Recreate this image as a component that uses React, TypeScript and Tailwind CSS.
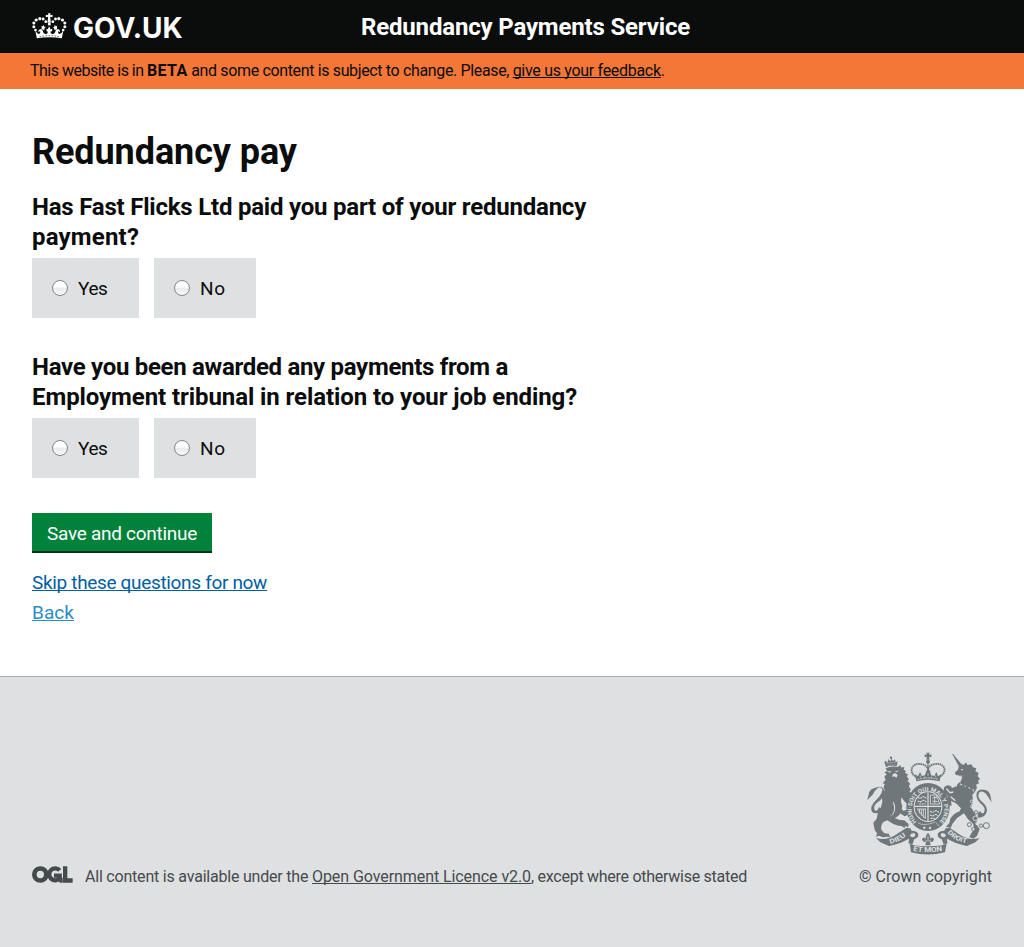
import React from "react";

function CrownIcon() {
  return (
    <svg viewBox="37 38 104 78" className="mt-px h-[26px] w-[35px] shrink-0" fill="#fff" aria-hidden="true">
      <path d="M51 114 L46 89 Q51 100 57 101 Q63 100 61 93 Q58 93 57 96 Q53 91 60 87 Q65 85 68 90 Q70 100 76 101 Q84 101 84 94 L80 92 V85 L84 87 L88 78 L92 87 L97 85 V92 L92 94 Q92 101 100 101 Q106 100 108 90 Q111 85 116 87 Q123 91 119 96 Q118 93 115 93 Q113 100 119 101 Q126 100 131 89 L126 114 Q88 107 51 114Z" />
      <path d="M85 39h7l-1 6 7-2v8l-7-2 2 18h-10l2-18-7 2v-8l7 2z" />
      <circle cx="88.500" cy="71" r="4.500" />
      <circle cx="78" cy="64" r="4.200" />
      <circle cx="70" cy="56" r="4.200" />
      <circle cx="60" cy="55" r="4.800" />
      <circle cx="49" cy="59" r="4.800" />
      <circle cx="42" cy="68" r="4.500" />
      <circle cx="42" cy="79" r="4.500" />
      <circle cx="47" cy="89" r="4" />
      <circle cx="99" cy="64" r="4.200" />
      <circle cx="107" cy="56" r="4.200" />
      <circle cx="117" cy="55" r="4.800" />
      <circle cx="128" cy="59" r="4.800" />
      <circle cx="135" cy="68" r="4.500" />
      <circle cx="135" cy="79" r="4.500" />
      <circle cx="130" cy="89" r="4" />
      <path d="M65 76l4 2 3-4 2 6 4 1-4 3-1 6-6-3-4 1 3-5zM112 76l-4 2-3-4-2 6-4 1 4 3 1 6 6-3 4 1-3-5z" />
      <path d="M59 109Q88 103 118 109" fill="none" stroke="#0b0c0c" strokeWidth="1.800" strokeDasharray="5 4" />
    </svg>
  );
}

function OglLogo() {
  return (
    <svg viewBox="0 0 123 51" className="h-[17px] w-[41px] shrink-0" aria-label="OGL">
      <circle cx="25" cy="25.500" r="18" fill="none" stroke="#454a4c" strokeWidth="14" />
      <path d="M83 13A18 18 0 1 0 83 37V29H66" fill="none" stroke="#454a4c" strokeWidth="13" />
      <path d="M93 1H106V37H122V50H93Z" fill="#454a4c" />
      <path d="M78 35H92V50H83Z" fill="#454a4c" />
    </svg>
  );
}

function Crest() {
  const ink = "#6f777b";
  const paper = "#dee0e2";
  return (
    <svg viewBox="51 36 375 309" className="h-[103px] w-[125px]" fill={ink} aria-hidden="true">
      <defs>
        <path id="garter" d="M200 246A49 54 0 1 1 268 246" />
        <path id="dieu" d="M121 312Q150 305 172 284" />
        <path id="motto" d="M189 332Q233 341 279 332" />
        <path id="droit" d="M292 279Q314 303 352 310" />
      </defs>

      {/* lion */}
      <path d="M108 81L103 66L108 62L112 69L116 57L121 65L125 55L129 64L135 58L137 67L143 64L140 79Q124 74 108 81Z" />
      <path d="M109 69L139 67M113 76L138 74" stroke={paper} strokeWidth="2" strokeDasharray="3 3" />
      <circle cx="123" cy="53" r="3.500" />
      <path d="M107 85Q124 76 143 81L151 75L153 82L163 82L161 89L168 93L165 98L175 104L170 108L177 119L172 122L181 132L176 137L183 150L178 153L184 161L181 169L190 178L184 184L190 192L183 196Q176 190 171 192L163 184L154 172Q151 187 157 199L153 216Q148 228 134 234Q148 242 163 241L176 252L174 263L168 257L163 264L155 258L145 257Q127 253 112 241L100 246Q91 258 94 269L103 280L116 281L121 291L111 290L99 292L86 287L78 291L81 280L74 270L70 248L80 236L84 217Q95 203 97 185Q92 165 104 151Q98 140 105 132L98 130L107 119L103 110L110 103L103 97L111 93Z" />
      <path d="M150 203L160 212L173 209L181 218L176 220L182 228L173 225L164 229L150 220Z" />
      <path d="M79 220Q61 220 64 201Q69 188 84 174Q98 159 97 147Q92 139 84 144Q74 151 68 164L52 180L56 163Q59 145 77 143Q99 135 102 151Q105 171 83 187Q66 199 75 212Q84 213 87 201L93 207Q90 219 79 220Z" />
      <path d="M109 92l16 3-5 3zM134 95l14-4-8 6zM128 102l9-2 6 6-4 7-6-4-6 2z" fill={paper} />
      <path d="M128 185Q136 205 129 220L119 231L131 221Q140 203 131 186Z" fill={paper} />

      {/* unicorn */}
      <path d="M308 42L333 72L329 82Z" stroke={ink} strokeWidth="2" />
      <path d="M327 77L332 71L342 74L348 67L352 75L364 73L369 82L379 85L376 94L386 99L383 108L390 117L384 122L387 130L378 134L381 143L374 157L367 164Q371 184 364 202L373 219L384 235L378 252L389 267L381 288L370 296L358 291L364 280L374 268L369 251L354 238L342 220L321 234L307 252L302 264L288 260L298 249L301 236Q310 221 329 214L333 205L318 190L303 183L305 197L297 197L290 180L295 171L281 154L282 142L291 136L301 137L307 144L321 137L331 127L337 111L327 108L317 105L315 97L324 89Z" />
      <path d="M332 87l8 1-4 4zM317 104l11 3 10 0-3 3-18-2z" fill={paper} />
      <path d="M324 132L371 153" stroke={paper} strokeWidth="9" />
      <path d="M321 135L328 126L333 137L341 130L345 141L353 136L357 147L365 143L370 153L365 158L321 139Z" />
      <path d="M382 234Q411 231 411 209Q409 195 394 184Q381 171 387 158Q395 149 408 161L425 187L421 166Q418 151 402 149Q385 146 380 159Q376 173 390 189Q409 202 402 218Q394 224 391 213L384 219Z" />
      <path d="M289 146l11 12 10-2M302 170l14 12" stroke={paper} strokeWidth="4" fill="none" />
      <path d="M311 131l9 8" stroke={paper} strokeWidth="3" />
      <g fill="none" stroke={ink} strokeWidth="3">
        <circle cx="409" cy="257" r="9" />
        <circle cx="393" cy="257" r="5" />
        <circle cx="358" cy="254" r="6" />
        <circle cx="371" cy="268" r="6" />
        <circle cx="378" cy="217" r="5" />
      </g>
      <g fill="none" stroke={paper} strokeWidth="2.500">
        <circle cx="368" cy="199" r="6" />
        <circle cx="376" cy="235" r="7" />
        <circle cx="381" cy="250" r="4" />
        <circle cx="365" cy="184" r="4" />
      </g>

      {/* royal crown */}
      <path d="M229 38h10l-2 7 7-2v9l-7-2 2 9h-10l2-9-7 2v-9l7 2z" />
      <circle cx="234" cy="65" r="6" />
      <path d="M201 112Q180 101 186 84Q194 68 217 73Q231 76 234 89Q237 76 251 73Q275 68 283 84Q287 101 266 112" fill="none" stroke={ink} strokeWidth="5.500" strokeDasharray="5 1.500" />
      <path d="M234 69V94" stroke={ink} strokeWidth="5" strokeDasharray="4 1.500" />
      <path d="M199 124L195 103L204 109L210 96L216 108L225 106L230 91L235 87L240 92L243 106L253 108L259 96L264 109L273 103L269 124Q234 115 199 124Z" />
      <path d="M203 118Q234 110 265 118" stroke={paper} strokeWidth="2.500" strokeDasharray="5 3" fill="none" />
      <path d="M211 106v6M257 106v6M234 100v7M222 112h5M241 112h5" stroke={paper} strokeWidth="2" />

      {/* garter and shield */}
      <ellipse cx="234" cy="201" rx="65" ry="72" />
      <ellipse cx="234" cy="200" rx="43" ry="46" fill={paper} />
      <ellipse cx="234" cy="200" rx="40" ry="43" />
      <text fontFamily="Roboto, sans-serif" fontWeight="700" fill={paper} fontSize="17">
        <textPath href="#garter" textLength="247" lengthAdjust="spacingAndGlyphs">HONI·SOIT QUI MAL Y PENSE</textPath>
      </text>
      <path d="M234 158V243M193 199H275" stroke={paper} strokeWidth="3.500" />
      <path d="M203 172q8 5 13 0t13 3M203 183q8 5 13 0t13 3M207 192h20M240 214q8 5 13 0t13 3M240 225q8 5 13 0t10 3M242 235h12" fill="none" stroke={paper} strokeWidth="3.500" strokeDasharray="6 2" />
      <path d="M241 165H259L269 192H241ZM247 174l14-2M247 183l16 2M254 168v22" fill="none" stroke={paper} strokeWidth="2.500" />
      <path d="M202 207L226 236V206M208 207v14M214 207v20M220 207v26M202 207H227" fill="none" stroke={paper} strokeWidth="2.500" />
      <circle cx="223" cy="263" r="3.500" fill={paper} />
      <circle cx="240" cy="264" r="3.500" fill={paper} />
      <path d="M204 249Q222 259 254 247M257 247L268 259" fill="none" stroke={paper} strokeWidth="2" />

      {/* motto ribbon */}
      <path d="M78 294Q110 305 144 280L169 264L181 265L190 281Q174 306 117 318L91 307Z" />
      <path d="M172 289Q172 275 188 272Q204 273 205 285Q204 294 193 297L187 314L175 309Q180 298 172 289Z" />
      <path d="M180 287Q183 278 193 280Q199 284 193 290Q185 294 180 287Z" fill={paper} />
      <path d="M389 294Q357 305 323 280L300 264L287 265L278 281Q294 306 351 318L376 307Z" />
      <path d="M296 289Q296 275 280 272Q264 273 263 285Q264 294 275 297L281 314L293 309Q288 298 296 289Z" />
      <path d="M288 287Q285 278 275 280Q269 284 275 290Q283 294 288 287Z" fill={paper} />
      <path d="M179 310Q185 319 234 319Q283 319 290 310L285 337Q234 350 183 337Z" />
      <g fontFamily="Roboto, sans-serif" fontWeight="700" fill={paper}>
        <text fontSize="20"><textPath href="#dieu" textLength="54" lengthAdjust="spacingAndGlyphs">DIEU</textPath></text>
        <text fontSize="21"><textPath href="#motto" textLength="89" lengthAdjust="spacingAndGlyphs">ET MON</textPath></text>
        <text fontSize="20"><textPath href="#droit" textLength="66" lengthAdjust="spacingAndGlyphs">DROIT</textPath></text>
      </g>

      {/* fleur-de-lis */}
      <path d="M234 278Q245 290 238 299Q246 287 252 297Q250 308 240 306L242 316H226L228 306Q218 308 216 297Q222 287 230 299Q223 290 234 278Z" />
      <path d="M224 303h20M234 287v13" stroke={paper} strokeWidth="2" />
    </svg>
  );
}

function Radio({ name, label, labelClass, boxClass }: { name: string; label: string; labelClass: string; boxClass: string }) {
  return (
    <label className={`flex h-[60px] items-center bg-[#dee0e2] pl-5 ${boxClass}`}>
      <input
        type="radio"
        name={name}
        className="mr-[10px] size-4 appearance-none rounded-full border border-[#858687] bg-linear-to-b from-white from-40% via-[#ebebeb] via-55% to-[#fafafa]"
      />
      <span className={`pt-0.5 text-[19px] leading-[30px] ${labelClass}`}>{label}</span>
    </label>
  );
}

function YesNo({ name }: { name: string }) {
  return (
    <div className="mt-1.5 flex gap-[15px]">
      <Radio name={name} label="Yes" boxClass="w-[107px]" labelClass="tracking-[-0.4px]" />
      <Radio name={name} label="No" boxClass="w-[102px]" labelClass="tracking-[0.7px]" />
    </div>
  );
}

export default function App() {
  return (
    <div className="flex min-h-[947px] flex-col bg-white font-['Roboto','Liberation_Sans',sans-serif] text-[#0b0c0c]">
      <header className="flex h-[53px] items-start border-b border-black bg-[#0b0c0c] px-8 text-white">
        <a href="#" className="flex w-[329px] gap-1.5 pt-3">
          <CrownIcon />
          <span className="pt-px font-['Inter','Liberation_Sans',sans-serif] text-[28px] leading-[30px] font-bold">GOV.UK</span>
        </a>
        <span className="pt-3 text-2xl leading-[30px] font-bold tracking-[-0.167px] whitespace-nowrap">Redundancy Payments Service</span>
      </header>

      <div className="h-9 bg-[#f47738] px-[30px] pt-2 text-base leading-5 whitespace-pre">
        <span className="tracking-[-0.505px]">This website is in </span>
        <strong className="tracking-[0.35px]">BETA</strong>
        <span className="tracking-[-0.356px]"> and some content is subject to change. Please, </span>
        <a href="#" className="tracking-[-0.3px] underline decoration-1 underline-offset-1 [text-decoration-skip-ink:none]">give us your feedback</a>.
      </div>

      <main className="h-[587px] px-8 pt-[43px]">
        <h1 className="text-4xl leading-10 font-bold tracking-[-0.08px]">Redundancy pay</h1>
        <form>
          <fieldset className="mt-5">
            <legend className="text-2xl leading-[30px] font-bold whitespace-nowrap">
              <span className="block tracking-[-0.213px]">Has Fast Flicks Ltd paid you part of your redundancy</span>
              <span className="block tracking-[0.19px]">payment?</span>
            </legend>
            <YesNo name="paid" />
          </fieldset>
          <fieldset className="mt-[34px]">
            <legend className="text-2xl leading-[30px] font-bold whitespace-nowrap">
              <span className="block tracking-[-0.302px]">Have you been awarded any payments from a</span>
              <span className="block tracking-[-0.082px]">Employment tribunal in relation to your job ending?</span>
            </legend>
            <YesNo name="tribunal" />
          </fieldset>
          <button
            type="button"
            className="mt-[35px] block h-10 w-[180px] border-b-2 border-[#003618] bg-[#00823b] pt-[3px] text-center text-[19px] leading-[35px] tracking-[-0.28px] whitespace-nowrap text-white"
          >
            Save and continue
          </button>
        </form>
        <div className="mt-[15px] flex flex-col items-start text-[19px] leading-[30px]">
          <a href="#" className="tracking-[-0.332px] text-[#005ea5] underline decoration-1 underline-offset-1 [text-decoration-skip-ink:none]">Skip these questions for now</a>
          <a href="#" className="tracking-[0.07px] text-[#2b8cc4] underline decoration-1 underline-offset-1 [text-decoration-skip-ink:none]">Back</a>
        </div>
      </main>

      <footer className="flex h-[271px] items-start justify-between border-t border-[#a1acb2] bg-[#dee0e2] px-8 pt-[75px] text-base leading-5 text-[#454a4c]">
        <div className="flex pt-[114px]">
          <OglLogo />
          <p className="ml-3 pt-px whitespace-pre">
            <span className="tracking-[-0.205px]">All content is available under the </span>
            <a href="#" className="tracking-[-0.075px] underline decoration-1 underline-offset-1 [text-decoration-skip-ink:none]">Open Government Licence v2.0</a>
            <span className="tracking-[-0.27px]">, except where otherwise stated</span>
          </p>
        </div>
        <div className="flex flex-col items-end">
          <Crest />
          <p className="mt-3 tracking-[0.03px] whitespace-nowrap">© Crown copyright</p>
        </div>
      </footer>
    </div>
  );
}
